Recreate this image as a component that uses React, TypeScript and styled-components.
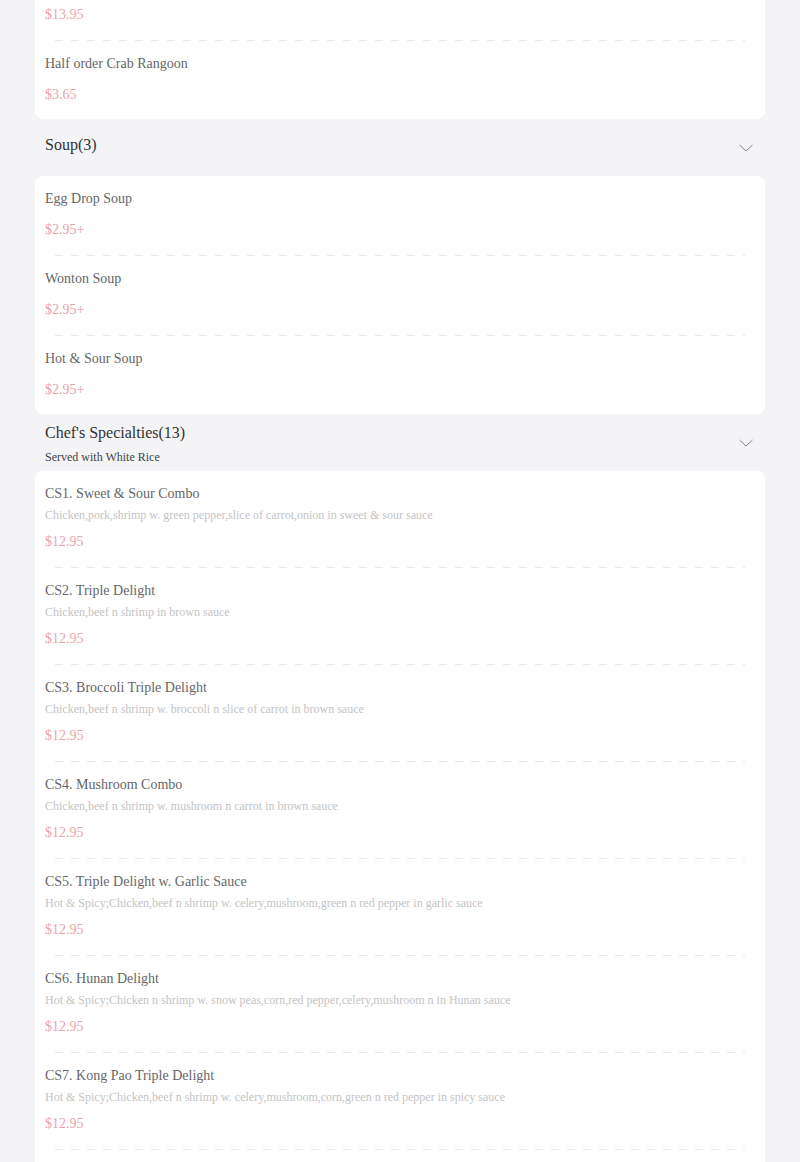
import React from "react";
import styled, { createGlobalStyle } from "styled-components";

const GlobalStyle = createGlobalStyle`
  html, body {
    margin: 0;
    padding: 0;
    background: #f4f4f6;
    font-family: "Liberation Serif", "Times New Roman", serif;
  }
`;

const Page = styled.div`
  padding: 0 35px;
  margin-top: -39px;
  display: flex;
  flex-direction: column;
`;

const Card = styled.div`
  background: #ffffff;
  border-radius: 8px;
  overflow: hidden;
`;

const Item = styled.div`
  position: relative;
  padding: 13px 10px 15px;
  display: flex;
  flex-direction: column;
  &:last-child {
    padding-bottom: 14px;
  }
  & + & {
    border-top: 1px solid transparent;
  }
  & + &::before {
    content: "";
    position: absolute;
    top: -1px;
    left: 20px;
    right: 20px;
    height: 1px;
    background: repeating-linear-gradient(
      to right,
      #e8e8e8 0,
      #e8e8e8 8px,
      transparent 8px,
      transparent 16px
    );
  }
`;

const Name = styled.div`
  font-size: 14px;
  line-height: 20px;
  color: #666666;
`;

const Desc = styled.div`
  font-size: 12px;
  line-height: 16px;
  margin-top: 3px;
  color: #c4c4c4;
`;

const Price = styled.div<{ $withDesc: boolean }>`
  font-size: 14px;
  line-height: 20px;
  margin-top: ${(p) => (p.$withDesc ? 9 : 11)}px;
  color: #eaa4aa;
`;

const Header = styled.div`
  height: 57px;
  padding: 0 10px;
  display: flex;
  align-items: center;
  justify-content: space-between;
`;

const HeaderText = styled.div<{ $single: boolean }>`
  display: flex;
  flex-direction: column;
  gap: 5px;
  padding-top: ${(p) => (p.$single ? 0 : 2)}px;
  padding-bottom: ${(p) => (p.$single ? 5 : 0)}px;
`;

const Title = styled.div`
  font-size: 16px;
  line-height: 22px;
  color: #333333;
`;

const Subtitle = styled.div`
  font-size: 12px;
  line-height: 16px;
  color: #444444;
`;

const Chevron = styled.svg`
  width: 16px;
  height: 10px;
  margin-right: 1px;
  flex: none;
`;

type MenuItem = { name: string; desc?: string; price: string };

type Section = {
  title: string;
  subtitle?: string;
  items: MenuItem[];
};

const firstItems: MenuItem[] = [
  { name: "Crab Rangoon", price: "$13.95" },
  { name: "Half order Crab Rangoon", price: "$3.65" },
];

const sections: Section[] = [
  {
    title: "Soup(3)",
    items: [
      { name: "Egg Drop Soup", price: "$2.95+" },
      { name: "Wonton Soup", price: "$2.95+" },
      { name: "Hot & Sour Soup", price: "$2.95+" },
    ],
  },
  {
    title: "Chef's Specialties(13)",
    subtitle: "Served with White Rice",
    items: [
      {
        name: "CS1. Sweet & Sour Combo",
        desc: "Chicken,pork,shrimp w. green pepper,slice of carrot,onion in sweet & sour sauce",
        price: "$12.95",
      },
      {
        name: "CS2. Triple Delight",
        desc: "Chicken,beef n shrimp in brown sauce",
        price: "$12.95",
      },
      {
        name: "CS3. Broccoli Triple Delight",
        desc: "Chicken,beef n shrimp w. broccoli n slice of carrot in brown sauce",
        price: "$12.95",
      },
      {
        name: "CS4. Mushroom Combo",
        desc: "Chicken,beef n shrimp w. mushroom n carrot in brown sauce",
        price: "$12.95",
      },
      {
        name: "CS5. Triple Delight w. Garlic Sauce",
        desc: "Hot & Spicy;Chicken,beef n shrimp w. celery,mushroom,green n red pepper in garlic sauce",
        price: "$12.95",
      },
      {
        name: "CS6. Hunan Delight",
        desc: "Hot & Spicy;Chicken n shrimp w. snow peas,corn,red pepper,celery,mushroom n in Hunan sauce",
        price: "$12.95",
      },
      {
        name: "CS7. Kong Pao Triple Delight",
        desc: "Hot & Spicy;Chicken,beef n shrimp w. celery,mushroom,corn,green n red pepper in spicy sauce",
        price: "$12.95",
      },
      {
        name: "CS8. Seafood Delight",
        desc: "Shrimp,scallop n crab meat w. mixed vegetables in white sauce",
        price: "$13.95",
      },
    ],
  },
];

const ItemRow = ({ item }: { item: MenuItem }) => (
  <Item>
    <Name>{item.name}</Name>
    {item.desc && <Desc>{item.desc}</Desc>}
    <Price $withDesc={!!item.desc}>{item.price}</Price>
  </Item>
);

const ChevronDown = () => (
  <Chevron viewBox="0 0 16 10" fill="none">
    <path d="M1.5 2 L8 8 L14.5 2" stroke="#8a8a8a" strokeWidth="1" />
  </Chevron>
);

export default function App() {
  return (
    <>
      <GlobalStyle />
      <Page>
        <Card>
          {firstItems.map((it) => (
            <ItemRow key={it.name} item={it} />
          ))}
        </Card>
        {sections.map((s) => (
          <React.Fragment key={s.title}>
            <Header>
              <HeaderText $single={!s.subtitle}>
                <Title>{s.title}</Title>
                {s.subtitle && <Subtitle>{s.subtitle}</Subtitle>}
              </HeaderText>
              <ChevronDown />
            </Header>
            <Card>
              {s.items.map((it) => (
                <ItemRow key={it.name} item={it} />
              ))}
            </Card>
          </React.Fragment>
        ))}
      </Page>
    </>
  );
}
